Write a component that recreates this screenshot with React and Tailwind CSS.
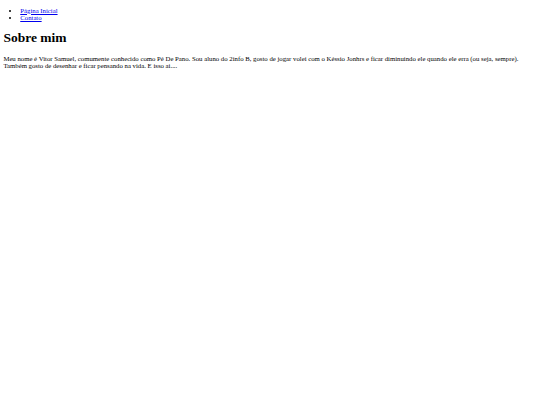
import React from 'react'

const App = () => {
  return (
    <div className="min-h-screen bg-white text-black font-['Liberation_Serif',serif] text-[6.75px] leading-[normal] px-[3.375px] pt-[6.75px]">
      <ul className="list-disc pl-[16.875px]">
        <li>
          <a href="#" className="text-[#0000ee] underline">Página Inicial</a>
        </li>
        <li>
          <a href="#" className="text-[#0000ee] underline">Contato</a>
        </li>
      </ul>
      <h1 className="text-[13.5px] font-bold leading-[normal] mt-[9.05px] mb-[9.05px]">Sobre mim</h1>
      <p>
        Meu nome é Vitor Samuel, comumente conhecido como Pé De Pano. Sou aluno do 2info B, gosto de jogar volei com o Késsio Jonhrs e ficar diminuindo ele quando ele erra (ou seja, sempre). Também gosto de desenhar e ficar pensando na vida. E isso ai....
      </p>
    </div>
  )
}

export default App
